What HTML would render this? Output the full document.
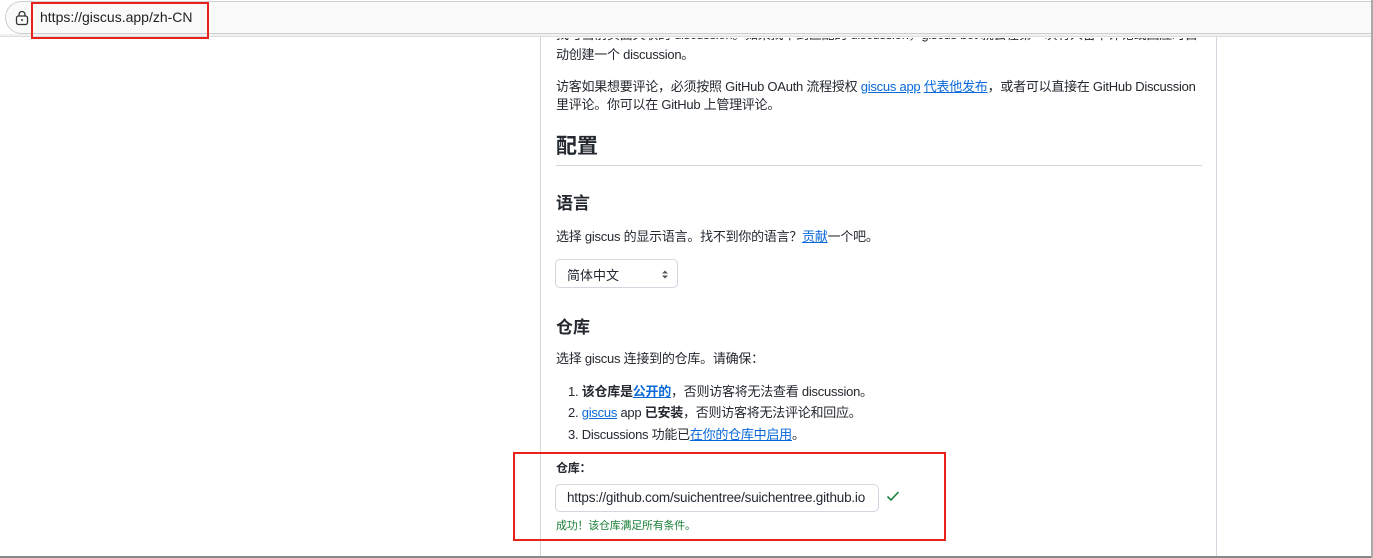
<!DOCTYPE html>
<html><head><meta charset="utf-8"><style>
*{margin:0;padding:0;box-sizing:border-box}
body{width:1373px;height:558px;overflow:hidden;background:#fff;font-family:"Liberation Sans","Noto Sans CJK SC",sans-serif;color:#24292f;font-size:13px;position:relative}
.bar{position:absolute;left:5px;top:1px;width:1372px;height:33px;border:1px solid #cfcfcf;border-right:none;border-radius:17px 0 0 17px;background:#fafafa}
.below{position:absolute;left:0;top:34px;width:1373px;height:3px;background:#f1f1f1;border-bottom:1px solid #ddd}
.url{position:absolute;left:40px;top:9px;font-size:14px;color:#222}
.red{position:absolute;border:2px solid #e8211b}
.col{position:absolute;left:540px;top:37px;width:677px;height:521px;border-left:1px solid #d0d7de;border-right:1px solid #d0d7de}
.t{position:absolute;left:556px;white-space:nowrap;line-height:18px;letter-spacing:-0.25px}
a{color:#0969da;text-decoration:underline}
h2{position:absolute;left:556px;font-size:21px;font-weight:bold;color:#24292f}
h3{position:absolute;left:556px;font-size:17px;font-weight:bold;color:#24292f}
</style></head><body>
<div class="bar"></div><div class="below"></div>
<svg style="position:absolute;left:14px;top:10px" width="16" height="16" viewBox="0 0 16 16"><rect x="2.5" y="6" width="11" height="8.5" rx="2" fill="none" stroke="#333" stroke-width="1.3"/><path d="M5 6V4.5a3 3 0 0 1 6 0V6" fill="none" stroke="#333" stroke-width="1.3"/><circle cx="8" cy="10" r="1" fill="#333"/></svg>
<div class="url">https://giscus.app/zh-CN</div>
<div class="red" style="left:31px;top:2px;width:178px;height:37px"></div>
<div class="col"></div>
<div style="position:absolute;left:541px;top:38px;width:675px;height:8px;overflow:hidden"><div class="t" style="left:15px;top:-12px">找与当前页面关联的 discussion。如果找不到匹配的 discussion，giscus bot 就会在第一次有人留下评论或回应时自</div></div>
<div class="t" style="top:46px">动创建一个 discussion。</div>
<div class="t" style="top:78px">访客如果想要评论，必须按照 GitHub OAuth 流程授权 <a>giscus app</a> <a>代表他发布</a>，或者可以直接在 GitHub Discussion</div>
<div class="t" style="top:96px">里评论。你可以在 GitHub 上管理评论。</div>
<h2 style="top:130px">配置</h2>
<div style="position:absolute;left:556px;top:165px;width:646px;height:1px;background:#d0d7de"></div>
<h3 style="top:189px">语言</h3>
<div class="t" style="top:228px">选择 giscus 的显示语言。找不到你的语言？<a>贡献</a>一个吧。</div>
<div style="position:absolute;left:555px;top:259px;width:123px;height:29px;border:1px solid #d0d7de;border-radius:5px;background:#fff"><span style="position:absolute;left:11px;top:5px">简体中文</span><svg style="position:absolute;left:105px;top:9px" width="8" height="11" viewBox="0 0 8 11"><path d="M1 4.5L4 1.5L7 4.5ZM1 6.5L4 9.5L7 6.5Z" fill="#555"/></svg></div>
<h3 style="top:313px">仓库</h3>
<div class="t" style="top:350px">选择 giscus 连接到的仓库。请确保：</div>
<div class="t" style="top:383px;left:568px">1. <b>该仓库是<a>公开的</a></b>，否则访客将无法查看 discussion。</div>
<div class="t" style="top:404px;left:568px">2. <a>giscus</a> app <b>已安装</b>，否则访客将无法评论和回应。</div>
<div class="t" style="top:426px;left:568px">3. Discussions 功能已<a>在你的仓库中启用</a>。</div>
<div class="red" style="left:513px;top:452px;width:433px;height:89px"></div>
<div class="t" style="top:459px;font-weight:bold;font-size:12px">仓库：</div>
<div style="position:absolute;left:555px;top:484px;width:324px;height:28px;border:1px solid #d0d7de;border-radius:5px"><span style="position:absolute;left:11px;top:5px;font-size:13.5px;letter-spacing:-0.2px">https://github.com/suichentree/suichentree.github.io</span></div>
<svg style="position:absolute;left:886px;top:490px" width="14" height="12" viewBox="0 0 14 12"><path d="M1.5 6.5L5 10L12.5 2" fill="none" stroke="#1a7f37" stroke-width="1.6"/></svg>
<div class="t" style="top:517px;font-size:11px;color:#1a7f37">成功！该仓库满足所有条件。</div>
<div style="position:absolute;left:0;top:556px;width:1373px;height:2px;background:#888"></div>
<div style="position:absolute;left:1371px;top:0;width:2px;height:558px;background:#aaa"></div>
</body></html>
